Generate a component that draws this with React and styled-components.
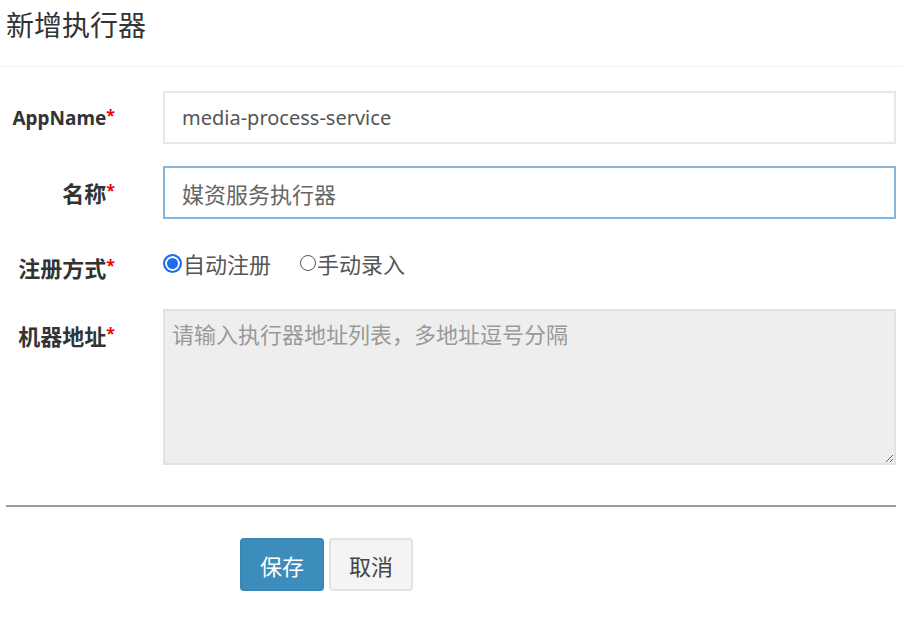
import React from "react";
import styled, { createGlobalStyle } from "styled-components";

const GlobalStyle = createGlobalStyle`
  html, body {
    margin: 0;
    padding: 0;
    background: #fff;
  }
  body {
    font-family: "Noto Sans", "Noto Sans CJK SC", sans-serif;
    color: #333;
  }
`;

const Modal = styled.div`
  width: 902px;
  background: #fff;
`;

const Header = styled.div`
  height: 67px;
  box-sizing: border-box;
  padding: 5px 6px 0;
  border-bottom: 1px solid #f2f2f2;
`;

const Title = styled.h4`
  margin: 0;
  font-family: "Noto Sans CJK SC", sans-serif;
  font-size: 28px;
  font-weight: 400;
  line-height: 38px;
  color: #333;
`;

const Form = styled.form`
  display: grid;
  grid-template-columns: 115px 1fr;
  column-gap: 48px;
  row-gap: 22px;
  padding: 24px 6px 40px 0;
`;

const Label = styled.label`
  text-align: right;
  font-size: ${(p) => (p.$latin ? "19px" : "22px")};
  font-weight: 700;
  line-height: 26px;
  padding-top: 14px;
  color: #333;
  font-family: "Noto Sans", "Noto Sans CJK SC", sans-serif;
`;

const Star = styled.span`
  color: #e00;
  font-size: 16px;
  vertical-align: top;
  line-height: 20px;
`;

const TextInput = styled.input`
  box-sizing: border-box;
  height: 53px;
  width: 100%;
  padding: 0 17px;
  border: 2px solid ${(p) => (p.$focused ? "#86b6dc" : "#e6e7ea")};
  border-radius: 0;
  outline: none;
  font-family: "Noto Sans", "Noto Sans CJK SC", sans-serif;
  font-size: ${(p) => (p.$cjk ? "22px" : "20px")};
  color: ${(p) => (p.$focused ? "#666" : "#555")};
  background: #fff;
`;

const RadioGroup = styled.div`
  display: flex;
  align-items: center;
  gap: 28px;
  height: 24px;
  padding: 10px 0 12px;
`;

const RadioOption = styled.label`
  display: flex;
  align-items: center;
  font-family: "Noto Sans CJK SC", sans-serif;
  font-size: 22px;
  line-height: 24px;
  color: #555;
  cursor: pointer;
`;

const RadioMark = styled.span`
  box-sizing: border-box;
  display: inline-block;
  width: ${(p) => (p.$checked ? "19px" : "16px")};
  height: ${(p) => (p.$checked ? "19px" : "16px")};
  margin: 0 1px 0 ${(p) => (p.$checked ? "0" : "1px")};
  border-radius: 50%;
  border: ${(p) => (p.$checked ? "2px solid #1d6fe8" : "1.5px solid #555")};
  background: ${(p) => (p.$checked ? "#1d6fe8" : "#fff")};
  box-shadow: ${(p) => (p.$checked ? "inset 0 0 0 2px #fff" : "none")};
`;

const TextArea = styled.textarea`
  box-sizing: border-box;
  width: 100%;
  height: 156px;
  padding: 7px 7px;
  border: 2px solid #e2e2e2;
  border-radius: 0;
  background: #eee;
  font-family: "Noto Sans CJK SC", sans-serif;
  font-size: 22px;
  line-height: 30px;
  color: #555;
  outline: none;
  resize: both;

  &::placeholder {
    color: #999;
  }
`;

const Footer = styled.div`
  margin: 0 6px;
  border-top: 2px solid #9c9c9c;
  padding: 31px 0 0 234px;
  display: flex;
  gap: 5px;
`;

const Button = styled.button`
  box-sizing: border-box;
  width: 84px;
  height: 53px;
  border-radius: 4px;
  font-family: "Noto Sans CJK SC", sans-serif;
  font-size: 22px;
  cursor: pointer;
  border: 2px solid ${(p) => (p.$primary ? "#3a86b4" : "#e3e3e3")};
  background: ${(p) => (p.$primary ? "#3c8dbc" : "#f4f4f4")};
  color: ${(p) => (p.$primary ? "#fff" : "#444")};
`;

const Required = ({ latin, children }) => (
  <Label $latin={latin}>
    {children}
    <Star>*</Star>
  </Label>
);

export default function App() {
  return (
    <>
      <GlobalStyle />
      <Modal>
        <Header>
          <Title>新增执行器</Title>
        </Header>
        <Form onSubmit={(e) => e.preventDefault()}>
          <Required latin>AppName</Required>
          <TextInput defaultValue="media-process-service" />

          <Required>名称</Required>
          <TextInput $focused $cjk defaultValue="媒资服务执行器" />

          <Required>注册方式</Required>
          <RadioGroup>
            <RadioOption>
              <RadioMark $checked />
              自动注册
            </RadioOption>
            <RadioOption>
              <RadioMark />
              手动录入
            </RadioOption>
          </RadioGroup>

          <Required>机器地址</Required>
          <TextArea readOnly placeholder="请输入执行器地址列表，多地址逗号分隔" />
        </Form>
        <Footer>
          <Button $primary>保存</Button>
          <Button>取消</Button>
        </Footer>
      </Modal>
    </>
  );
}
